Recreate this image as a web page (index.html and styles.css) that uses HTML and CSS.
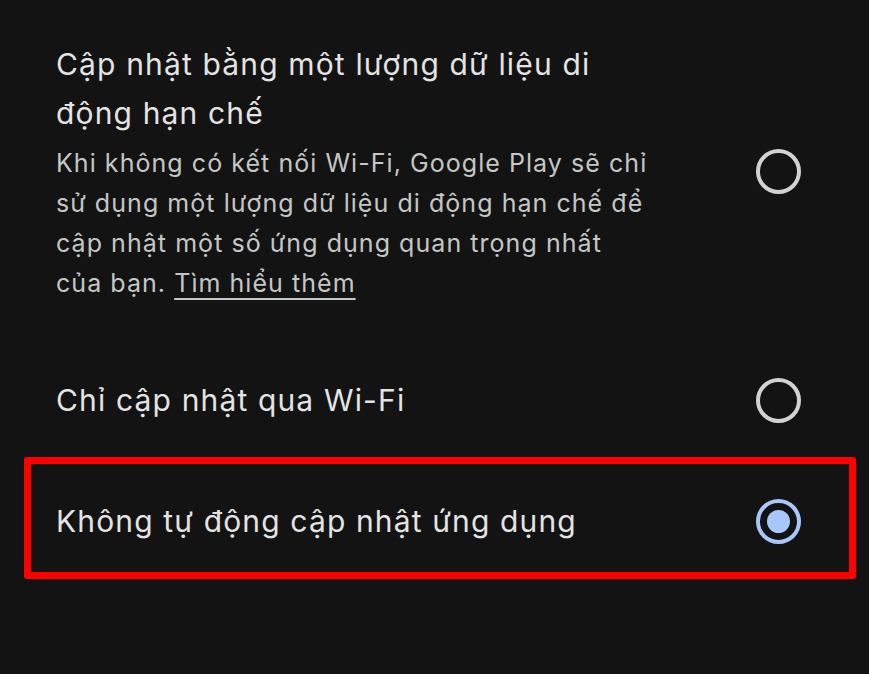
FILE: index.html
```html
<!DOCTYPE html>
<html lang="vi">
<head>
<meta charset="utf-8">
<link rel="stylesheet" href="styles.css">
</head>
<body>
<div class="list">
  <div class="row row-first">
    <div class="text">
      <div class="title">Cập nhật bằng một lượng dữ liệu di động hạn chế</div>
      <div class="desc">Khi không có kết nối Wi-Fi, Google Play sẽ chỉ sử dụng một lượng dữ liệu di động hạn chế để cập nhật một số ứng dụng quan trọng nhất<br>của bạn. <span class="link">Tìm hiểu thêm</span></div>
    </div>
    <div class="radio"></div>
  </div>
  <div class="row row-single">
    <div class="text"><div class="title">Chỉ cập nhật qua Wi-Fi</div></div>
    <div class="radio"></div>
  </div>
  <div class="row row-single row-selected">
    <div class="text"><div class="title">Không tự động cập nhật ứng dụng</div></div>
    <div class="radio radio-on"><div class="dot"></div></div>
    <div class="highlight"></div>
  </div>
</div>
</body>
</html>
```
FILE: styles.css
```css
html, body {
  margin: 0;
  padding: 0;
  background: #131313;
  height: 100%;
}
body {
  font-family: "Inter", "Roboto", sans-serif;
  overflow: hidden;
}
.list {
  display: flex;
  flex-direction: column;
}
.row {
  position: relative;
  display: flex;
  align-items: center;
  padding: 0 68px 0 56px;
  gap: 20px;
}
.row-first {
  padding-top: 40px;
  padding-bottom: 37px;
}
.row-single {
  height: 121px;
}
.text {
  flex: 1;
}
.title {
  color: #e3e3e3;
  font-size: 30px;
  letter-spacing: 1.15px;
  line-height: 49px;
  max-width: 600px;
}
.desc {
  color: #c4c7c5;
  font-size: 25px;
  letter-spacing: 1.05px;
  line-height: 40px;
  margin-top: 5px;
  max-width: 625px;
}
.link {
  text-decoration: underline;
  text-underline-offset: 6px;
  text-decoration-thickness: 2px;
}
.radio {
  width: 37px;
  height: 37px;
  border: 4px solid #d2d2d2;
  border-radius: 50%;
  flex: none;
  display: flex;
  align-items: center;
  justify-content: center;
}
.radio-on {
  border-color: #a8c7fa;
}
.dot {
  width: 23px;
  height: 23px;
  border-radius: 50%;
  background: #a8c7fa;
}
.highlight {
  position: absolute;
  left: 24px;
  right: 13px;
  top: -4px;
  bottom: 3px;
  border: 7px solid #ff0000;
  border-radius: 3px;
  pointer-events: none;
}
```
